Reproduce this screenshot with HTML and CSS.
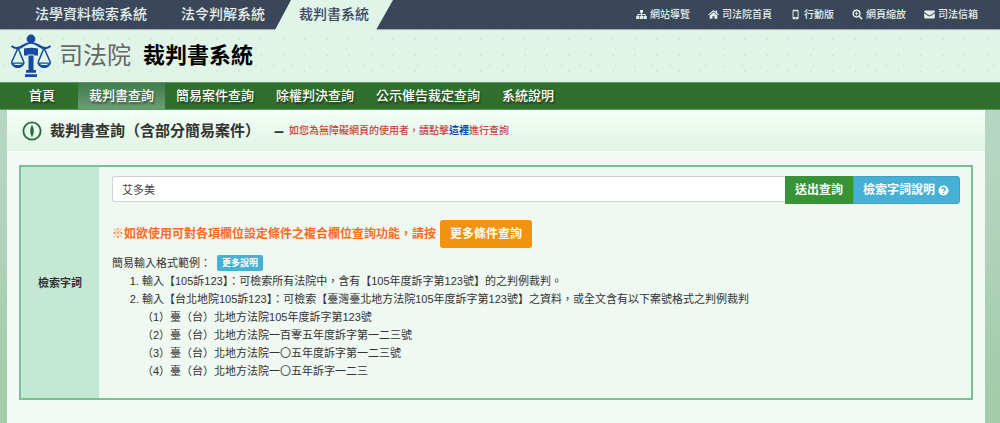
FILE: index.html
```
<!DOCTYPE html>
<html lang="zh-Hant">
<head>
  <meta charset="UTF-8">
  <title>裁判書系統</title>
  <meta name="viewport" content="width=device-width, initial-scale=1.0">
  <link rel="stylesheet" href="styles.css">
</head>
<body>
  <div class="topbar">
    <nav class="systems">
      <a href="#">法學資料檢索系統</a>
      <a href="#">法令判解系統</a>
      <a href="#" class="current">裁判書系統</a>
    </nav>
    <nav class="tools">
      <a href="#">
        <svg class="icon" viewBox="0 0 12 12"><path d="M4.3 1h3.4v3.2H6.6v1.3h3.9v2.2h1.3V11H8.3V7.700h1.200V6.500H6.600v1.200h1.200V11H4.300V7.700h1.200V6.500H2.500v1.200h1.200V11H.2V7.700h1.300V5.500h4V4.200H4.300z"/></svg>
        網站導覽
      </a>
      <a href="#">
        <svg class="icon" viewBox="0 0 12 12"><path d="M6 3.600 10.200 7v3.700H7.100V7.800H4.900v2.900H1.800V7z"/><path d="M6 1.200 8.300 3V1.700h1.600v2.700l1.900 1.500-.7.900L6 2.800.9 6.800l-.7-.9z"/></svg>
        司法院首頁
      </a>
      <a href="#">
        <svg class="icon" viewBox="0 0 12 12"><path fill-rule="evenodd" d="M4 .8h4.200a1.200 1.200 0 0 1 1.200 1.200v8a1.200 1.200 0 0 1-1.200 1.200H4A1.200 1.200 0 0 1 2.800 10V2A1.200 1.200 0 0 1 4 .8zM3.900 2.500v6.300h4.400V2.500zM5.500 9.500v.9h1.200v-.9z"/></svg>
        行動版
      </a>
      <a href="#">
        <svg class="icon" viewBox="0 0 12 12"><circle cx="5" cy="5" r="3.700" fill="none" stroke="currentColor" stroke-width="1.500"/><path d="M4.500 3h1v1.500H7v1H5.500V7h-1V5.500H3v-1h1.500zM7.300 8.400l1.100-1.100 3.200 3.100-1.200 1.200z"/></svg>
        網頁縮放
      </a>
      <a href="#">
        <svg class="icon" viewBox="0 0 12 12"><path d="M1.200 1.700h9.600q1 0 1 .9c0 .7-.6 1.200-1.100 1.600L7.300 6.600c-.9.600-1.700.6-2.600 0L1.300 4.200C.7 3.800.2 3.300.2 2.600q0-.9 1-.9z"/><path d="M.2 4.500 4.500 7.500c1 .6 2 .6 3 0l4.300-3v4.800q0 1-1 1H1.200q-1 0-1-1z"/></svg>
        司法信箱
      </a>
    </nav>
  </div>

  <header class="banner">
    <a href="#" class="logo">
      <svg class="scales" viewBox="0 0 42 44">
        <circle cx="21" cy="5" r="4.400"/>
        <path d="M1.500 12c4 3.500 8 2.500 12-.5 4.500-3.300 10.500-3.300 15 0 4 3 8 4 12 .5" fill="none" stroke="currentColor" stroke-width="2.200"/>
        <path d="M14 14.500q7-1.500 14 0V21.500h-3.800v-1h-6.400v1H14z"/>
        <path d="M18.500 21.500h5v14.500h-5zM16 36h10v2.700H16zM15 40.300h12V43H15z"/>
        <path d="M8 14 1.500 28.500M8 14 14 28.500M34 14 28 28.500M34 14 40.500 28.500" fill="none" stroke="currentColor" stroke-width="1.500"/>
        <path d="M.8 28.500h14C14 32 11 34 7.800 34S1.500 32 .8 28.500zM27.200 28.500h14C40.500 32 37.500 34 34.200 34s-6.200-2-7-5.500z"/>
        <path class="pan" d="M3 29.800h9.500c-1.500 1.700-8 1.700-9.500 0zM29.500 29.800H39c-1.500 1.700-8 1.700-9.500 0z"/>
      </svg>
      <span>司法院</span>
    </a>
    <h1>裁判書系統</h1>
  </header>

  <nav class="menu">
    <a href="#">首頁</a>
    <a href="#" class="active">裁判書查詢</a>
    <a href="#">簡易案件查詢</a>
    <a href="#">除權判決查詢</a>
    <a href="#">公示催告裁定查詢</a>
    <a href="#">系統說明</a>
  </nav>

  <main class="panel">
    <div class="page-title">
      <svg class="compass" viewBox="0 0 20 20"><circle cx="10" cy="10" r="8.600" fill="none" stroke="currentColor" stroke-width="1.900"/><path d="M10 3.500q3.600 6.500 0 13q-3.600-6.500 0-13z"/></svg>
      <h2>裁判書查詢（含部分簡易案件）</h2>
      <span class="dash">–</span>
      <p class="notice">如您為無障礙網頁的使用者，請點擊<a href="#">這裡</a>進行查詢</p>
    </div>

    <form class="search">
      <label class="search-label" for="keyword">檢索字詞</label>
      <div class="search-body">
        <div class="input-group">
          <input type="text" id="keyword" value="艾多美">
          <button type="submit" class="btn submit">送出查詢</button>
          <button type="button" class="btn info">檢索字詞說明
            <svg class="help" viewBox="0 0 12 12"><circle cx="6" cy="6" r="5.500"/><path d="M4 4.700C4.200 2.400 8 2.500 7.900 4.700 7.900 6 6.100 6 6.100 7.400M6.100 8.400v1.300" fill="none"/></svg>
          </button>
        </div>
        <div class="more">
          <span>※如欲使用可對各項欄位設定條件之複合欄位查詢功能，請按</span>
          <button type="button" class="btn warning">更多條件查詢</button>
        </div>
        <div class="example-head">
          <span>簡易輸入格式範例：</span>
          <button type="button" class="btn info small">更多說明</button>
        </div>
        <ol class="examples">
          <li>輸入【105訴123】：可檢索所有法院中，含有【105年度訴字第123號】的之判例裁判。</li>
          <li>輸入【台北地院105訴123】：可檢索【臺灣臺北地方法院105年度訴字第123號】之資料，或全文含有以下案號格式之判例裁判
            <ul>
              <li>（1）臺（台）北地方法院105年度訴字第123號</li>
              <li>（2）臺（台）北地方法院一百零五年度訴字第一二三號</li>
              <li>（3）臺（台）北地方法院一〇五年度訴字第一二三號</li>
              <li>（4）臺（台）北地方法院一〇五年訴字一二三</li>
            </ul>
          </li>
        </ol>
      </div>
    </form>
  </main>
</body>
</html>
```
FILE: styles.css
```
* {
  box-sizing: border-box;
}

body {
  margin: 0;
  min-height: 100vh;
  display: flex;
  flex-direction: column;
  background: linear-gradient(#b5d6c2, #b5d6c2 150px, #a5cba9 400px);
  font-family: "Liberation Sans", "Noto Sans CJK TC", sans-serif;
  font-size: 11px;
  line-height: 18px;
  color: #333;
}

a {
  text-decoration: none;
}

h1, h2, p, ol, ul {
  margin: 0;
  padding: 0;
}

svg {
  fill: currentColor;
}

/* top bar */
.topbar {
  display: flex;
  justify-content: space-between;
  height: 30px;
  padding-right: 22px;
  background: #3a475a;
  border-bottom: 1px solid #a3b0ad;
}

.systems {
  display: flex;
  padding-left: 16px;
  font-size: 14px;
  font-weight: 500;
  line-height: 29px;
}

.systems a {
  padding: 0 15px 0 19px;
  color: #e4eee8;
}

.systems .current {
  height: 30px;
  margin-left: -5px;
  padding: 0 24px;
  background: #e0f4e7;
  color: #3a475a;
  clip-path: polygon(16px 0, 100% 0, calc(100% - 17px) 100%, 0 100%);
}

.tools {
  display: flex;
  align-items: center;
  gap: 18px;
  font-size: 10px;
  font-weight: 500;
}

.tools a {
  display: flex;
  align-items: center;
  gap: 3px;
  color: #e4eee8;
}

.icon {
  width: 11px;
  height: 11px;
}

/* banner */
.banner {
  display: flex;
  align-items: center;
  gap: 12px;
  height: 52px;
  padding-left: 10px;
  background-color: #e0f4e7;
  background-image:
    radial-gradient(circle at 4px 4px, #d2eadd 1px, transparent 1px),
    radial-gradient(circle at 13px 11px, #d2eadd 1px, transparent 1px);
  background-size: 18px 18px, 22px 16px;
  background-position: 270px 14px;
  background-repeat: repeat;
}

.logo {
  display: flex;
  align-items: center;
  gap: 7px;
  color: #666;
  font-size: 24px;
  font-weight: 400;
}

.scales {
  width: 42px;
  height: 44px;
  color: #164a9e;
}

.scales .pan {
  fill: #e0f4e7;
}

.banner h1 {
  font-size: 22px;
  line-height: 32px;
  color: #000;
}

/* main menu */
.menu {
  display: flex;
  height: 28px;
  padding-left: 18px;
  background: #316f2d;
  border-top: 1px solid #5c9960;
  border-bottom: 1px solid #5c9960;
  font-size: 13px;
  font-weight: 500;
  line-height: 26px;
}

.menu a {
  padding: 0 11px;
  color: #fff;
  text-shadow: 1px 2px 2px rgba(0, 0, 0, 0.5);
}

.menu a:first-child {
  margin-right: 12px;
}

.menu .active {
  background: linear-gradient(#3f7a4c, #6b9f74);
}

/* content */
.panel {
  flex: 1;
  margin: 0 15px 0 7px;
  padding-bottom: 24px;
  background: #f3f9f5;
}

.page-title {
  display: flex;
  align-items: center;
  height: 42px;
  padding-left: 15px;
  background: linear-gradient(#f3fff7, #e0f4e4);
  border-bottom: 1px solid #fff;
}

.compass {
  width: 20px;
  height: 20px;
  margin-right: 8px;
  color: #2d6a3b;
}

.page-title h2 {
  font-size: 15px;
}

.dash {
  margin: 0 5px 0 14px;
  font-size: 18px;
  font-weight: bold;
}

.notice {
  font-size: 10px;
  font-weight: 500;
  color: #c9433f;
}

.notice a {
  color: #0b48ad;
  font-weight: bold;
}

.search {
  display: flex;
  margin: 13px 12px 0;
  background: #eff8f1;
  border: 2px solid #7abf95;
}

.search-label {
  display: flex;
  align-items: center;
  justify-content: center;
  width: 78px;
  background: #c5e8d4;
  font-weight: bold;
}

.search-body {
  flex: 1;
  padding: 9px 11px 18px 13px;
}

.btn {
  height: 28px;
  padding: 0 10px;
  border: 0;
  border-radius: 3px;
  color: #fff;
  font-family: inherit;
  font-size: 12px;
  font-weight: bold;
  line-height: 18px;
  cursor: pointer;
}

.input-group {
  display: flex;
}

.input-group input {
  flex: 1;
  min-width: 0;
  height: 26px;
  padding: 0 9px;
  border: 1px solid #ccd5d0;
  border-right: 0;
  border-radius: 3px 0 0 3px;
  background: #fff;
  color: #444;
  font-family: inherit;
  font-size: 11px;
}

.input-group .submit {
  border-radius: 0;
}

.input-group .info {
  display: flex;
  align-items: center;
  gap: 3px;
  padding: 0 10px 0 9px;
  border: 1px solid #3ba2ca;
  border-radius: 0 3px 3px 0;
}

.submit {
  background: #369336;
}

.info {
  background: #46b1d5;
}

.warning {
  background: #f2920f;
}

.help {
  width: 11px;
  height: 11px;
}

.help path {
  stroke: #46b1d5;
  stroke-width: 1.6;
}

.more {
  display: flex;
  align-items: center;
  gap: 4px;
  margin-top: 16px;
  color: #fe6b1c;
  font-size: 12px;
  font-weight: bold;
}

.example-head {
  display: flex;
  align-items: center;
  gap: 6px;
  margin-top: 6px;
}

.small {
  height: 16px;
  padding: 0 5px;
  border-radius: 2px;
  font-size: 9px;
  line-height: 16px;
}

.examples {
  padding-left: 30px;
}

.examples ul {
  list-style: none;
}
```
